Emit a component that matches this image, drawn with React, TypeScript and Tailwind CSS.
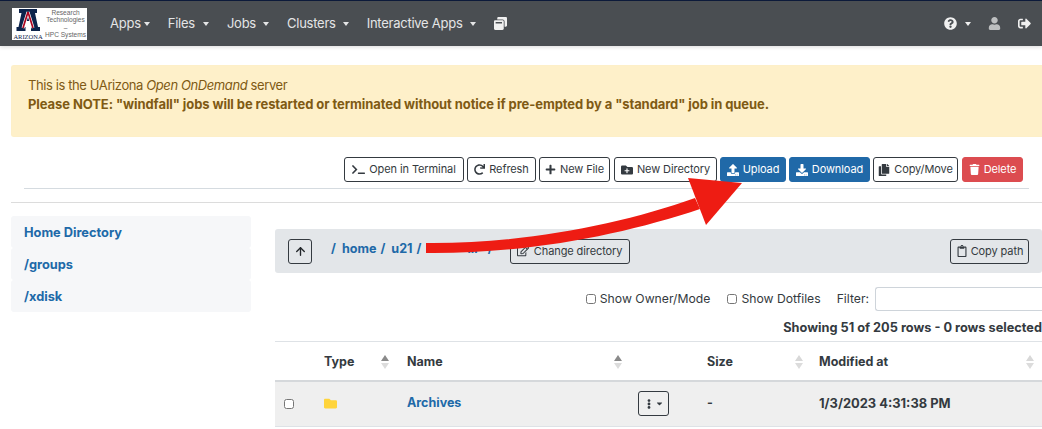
import React from 'react';
import { ArrowUp } from 'lucide-react';
import {
  FaCaretDown,
  FaCopy,
  FaDownload,
  FaEllipsisV,
  FaFolder,
  FaFolderPlus,
  FaPlus,
  FaQuestionCircle,
  FaRedo,
  FaRegClipboard,
  FaRegEdit,
  FaSignOutAlt,
  FaTerminal,
  FaTrash,
  FaUpload,
  FaUser,
  FaWindowRestore,
} from 'react-icons/fa';

const Caret = ({ className }: { className: string }) => (
  <span className={`inline-block h-0 w-0 border-x-[3px] border-t-[4px] border-x-transparent border-t-current ${className}`} />
);

const NavItem = ({ label, caretGap }: { label: string; caretGap: string }) => (
  <div className="mr-[18px] flex items-center text-[13px] tracking-[-0.25px] text-[#e4e5e6]">
    {label}
    <Caret className={caretGap} />
  </div>
);

const ToolButton = ({ icon, label, className }: { icon: React.ReactNode; label: string; className: string }) => (
  <button className={`flex h-[25px] items-center justify-center gap-[4px] rounded-[3px] border text-[11px] tracking-[-0.1px] ${className}`}>
    {icon}
    {label}
  </button>
);

const SortArrows = ({ dark }: { dark?: boolean }) => (
  <span className="flex flex-col items-center gap-[2px]">
    <span className={`h-0 w-0 border-x-[4px] border-b-[6px] border-x-transparent ${dark ? 'border-b-[#8a8a8a]' : 'border-b-[#d8d8d8]'}`} />
    <span className="h-0 w-0 border-x-[4px] border-t-[6px] border-x-transparent border-t-[#dcdcdc]" />
  </span>
);

const SideLink = ({ label }: { label: string }) => (
  <div className="flex h-[32px] items-center rounded-[3px] bg-[#f6f7f9] pl-[13px] pt-[1px] text-[12.8px] font-bold text-[#2069a8]">{label}</div>
);

const Logo = () => (
  <div className="flex h-[32px] w-[75px] shrink-0 bg-white">
    <div className="flex w-[32px] flex-col items-center pt-[1px]">
      <svg viewBox="0 0 24 22" className="h-[22px] w-[24px]">
        <path d="M3 0h18v4h-2l3 14h2v4h-9v-4h1.500l-.5-3H8.500L8 18h1.500v4h-9v-4h2l3-14H3z" fill="#0c234b" />
        <path d="M12 3l-5 16M12 3l5 16M8.500 13.500h7" stroke="#fff" strokeWidth="3" fill="none" />
        <path d="M12 3l-5 16M12 3l5 16" stroke="#ab0520" strokeWidth="1.700" fill="none" />
      </svg>
      <span className="mt-[2px] font-['Liberation_Serif',serif] text-[6.5px] leading-[7px] text-[#0c234b]">ARIZONA</span>
    </div>
    <div className="flex flex-1 flex-col items-center pt-[1.5px] font-['Liberation_Sans',sans-serif] text-[6.6px] leading-[7.3px] text-[#666]">
      <span>Research</span>
      <span>Technologies</span>
      <span>–</span>
      <span>HPC Systems</span>
    </div>
  </div>
);

export default function App() {
  return (
    <div className="relative h-[429px] w-[1042px] overflow-hidden bg-white font-['Inter',sans-serif] text-[#212529]">
      <nav className="flex h-[46px] items-center border-t border-t-[#0c1a3a] bg-[#4a4e52] pl-[12px] pr-[11px] shadow-[0_1px_4px_rgba(0,0,0,0.15)]">
        <Logo />
        <div className="ml-[23px] flex items-center">
          <NavItem label="Apps" caretGap="ml-[3px]" />
          <NavItem label="Files" caretGap="ml-[8px]" />
          <NavItem label="Jobs" caretGap="ml-[7px]" />
          <NavItem label="Clusters" caretGap="ml-[7px]" />
          <NavItem label="Interactive Apps" caretGap="ml-[7px]" />
          <FaWindowRestore className="h-[13px] w-[13px] text-[#f0f0f0]" />
        </div>
        <div className="ml-auto flex items-center text-[#f0f0f0]">
          <FaQuestionCircle className="h-[13px] w-[13px]" />
          <Caret className="ml-[8px]" />
          <FaUser className="ml-[17px] h-[13px] w-[13px] text-[#bdbfc0]" />
          <FaSignOutAlt className="ml-[17px] h-[13px] w-[13px]" />
        </div>
      </nav>

      <div className="ml-[11px] mt-[19px] h-[72px] rounded-l-[3px] border border-r-0 border-[#fdefc8] bg-[#fef0c9] pl-[16px] pt-[10px] text-[13px] leading-[19px] text-[#7f5a14]">
        <div className="tracking-[-0.4px]">
          This is the UArizona <em>Open OnDemand</em> server
        </div>
        <div className="font-bold tracking-[-0.08px]">Please NOTE: "windfall" jobs will be restarted or terminated without notice if pre-empted by a "standard" job in queue.</div>
      </div>

      <div className="ml-[24px] mr-[13px] mt-[20px] flex h-[32px] items-start justify-end gap-[3px] border-b border-[#d5dbe0] pr-[6px]">
        <ToolButton className="w-[120px] border-[#343a40] text-[#343a40]" icon={<FaTerminal className="h-[13px] w-[13px]" />} label="Open in Terminal" />
        <ToolButton className="w-[69px] border-[#343a40] text-[#343a40]" icon={<FaRedo className="h-[11px] w-[11px]" />} label="Refresh" />
        <ToolButton className="w-[71px] border-[#343a40] text-[#343a40]" icon={<FaPlus className="h-[11px] w-[11px]" />} label="New File" />
        <ToolButton className="ml-[1px] w-[103px] border-[#343a40] text-[#343a40]" icon={<FaFolderPlus className="h-[12px] w-[12px]" />} label="New Directory" />
        <ToolButton className="w-[66px] border-[#2069a8] bg-[#2069a8] text-white" icon={<FaUpload className="h-[12px] w-[12px]" />} label="Upload" />
        <ToolButton className="w-[81px] border-[#2069a8] bg-[#2069a8] text-white" icon={<FaDownload className="h-[12px] w-[12px]" />} label="Download" />
        <ToolButton className="w-[85px] border-[#343a40] text-[#343a40]" icon={<FaCopy className="h-[12px] w-[12px]" />} label="Copy/Move" />
        <ToolButton className="ml-[1px] w-[61px] border-[#dc4c50] bg-[#dc4c50] text-white" icon={<FaTrash className="h-[11px] w-[11px]" />} label="Delete" />
      </div>

      <div className="ml-[11px] mt-[13px] flex border-t border-[#dcdcdc]">
        <aside className="mt-[13px] flex h-[96px] w-[240px] shrink-0 flex-col">
          <SideLink label="Home Directory" />
          <SideLink label="/groups" />
          <SideLink label="/xdisk" />
        </aside>

        <main className="ml-[24px] mt-[26px] flex-1">
          <div className="flex h-[44px] items-center rounded-[3px] bg-[#e3e6e9] pl-[13px] pr-[13px]">
            <button className="flex h-[25px] w-[24px] items-center justify-center rounded-[3px] border border-[#343a40] text-[#212529]">
              <ArrowUp className="h-[13px] w-[13px]" strokeWidth={2.5} />
            </button>
            <div className="relative ml-[19px] flex -translate-y-[2px] items-center text-[12.6px] font-bold text-[#2069a8]">
              <span>/</span>
              <span className="ml-[6px]">home</span>
              <span className="ml-[4px]">/</span>
              <span className="ml-[6px]">u21</span>
              <span className="ml-[4px]">/</span>
              <span className="ml-[46px]">lll</span>
              <span className="ml-[10px]">/</span>
            </div>
            <button className="ml-[17px] flex h-[25px] w-[120px] items-center justify-center gap-[5px] rounded-[3px] border border-[#343a40] text-[11px] tracking-[-0.1px] text-[#343a40]">
              <FaRegEdit className="h-[12px] w-[12px]" />
              Change directory
            </button>
            <button className="ml-auto flex h-[25px] w-[79px] items-center justify-center gap-[3px] rounded-[3px] border border-[#343a40] text-[11px] tracking-[-0.1px] text-[#343a40]">
              <FaRegClipboard className="h-[12px] w-[12px]" />
              Copy path
            </button>
          </div>

          <div className="mt-[14px] flex h-[24px] items-center justify-end text-[12.2px] text-[#343a40]">
            <label className="flex items-center">
              <input type="checkbox" className="mr-[4px] h-[10px] w-[10px]" />
              Show Owner/Mode
            </label>
            <label className="ml-[17px] flex items-center">
              <input type="checkbox" className="mr-[4px] h-[10px] w-[10px]" />
              Show Dotfiles
            </label>
            <span className="ml-[16px]">Filter:</span>
            <input className="ml-[6px] h-[24px] w-[167px] rounded-l-[3px] border border-r-0 border-[#ced4da] bg-white" />
          </div>

          <div className="mt-[9px] pb-[5px] text-right text-[12.75px] font-bold leading-[16px] text-[#343a40]">Showing 51 of 205 rows - 0 rows selected</div>

          <table className="w-full table-fixed border-collapse text-[12.5px]">
            <thead>
              <tr className="h-[39px] border-t border-b-[2px] border-t-[#dee2e6] border-b-[#d5d8db] text-[#343a40]">
                <th className="w-[34px]" />
                <th className="w-[98px] pt-[3px] text-left font-bold">
                  <div className="flex items-center justify-between pl-[15px] pr-[18px]">Type <SortArrows dark /></div>
                </th>
                <th className="w-[231px] pt-[3px] text-left font-bold">
                  <div className="flex items-center justify-between pr-[16px]">Name <SortArrows dark /></div>
                </th>
                <th className="w-[69px]" />
                <th className="w-[112px] pt-[3px] text-left font-bold">
                  <div className="flex items-center justify-between pr-[16px]">Size <SortArrows /></div>
                </th>
                <th className="pt-[3px] text-left font-bold">
                  <div className="flex items-center justify-between pr-[8px]">Modified at <SortArrows /></div>
                </th>
              </tr>
            </thead>
            <tbody>
              <tr className="h-[46px] border-b border-[#dee2e6] bg-[#efefef] font-bold text-[#343a40]">
                <td className="pl-[9px]">
                  <input type="checkbox" className="block h-[10px] w-[10px]" />
                </td>
                <td className="pl-[15px]">
                  <FaFolder className="h-[13px] w-[13px] text-[#ffd43b]" />
                </td>
                <td className="text-[#2069a8]">Archives</td>
                <td>
                  <button className="flex h-[25px] w-[31px] items-center justify-center rounded-[3px] border border-[#343a40] text-[#343a40]">
                    <FaEllipsisV className="h-[10px] w-[10px]" />
                    <FaCaretDown className="ml-[1px] h-[9px] w-[9px]" />
                  </button>
                </td>
                <td>-</td>
                <td className="text-[12.9px]">1/3/2023 4:31:38 PM</td>
              </tr>
            </tbody>
          </table>
        </main>
      </div>

      {/* red annotation arrow drawn over the screenshot */}
      <svg className="pointer-events-none absolute left-0 top-0" width="1042" height="429" viewBox="0 0 1042 429">
        <path d="M426 243 C520 244 620 225 695 198 L700 209 C625 234 530 254 426 253 Z" fill="#ee1c13" />
        <path d="M742 183 L688 178 L706 225 Z" fill="#ee1c13" />
      </svg>
    </div>
  );
}
